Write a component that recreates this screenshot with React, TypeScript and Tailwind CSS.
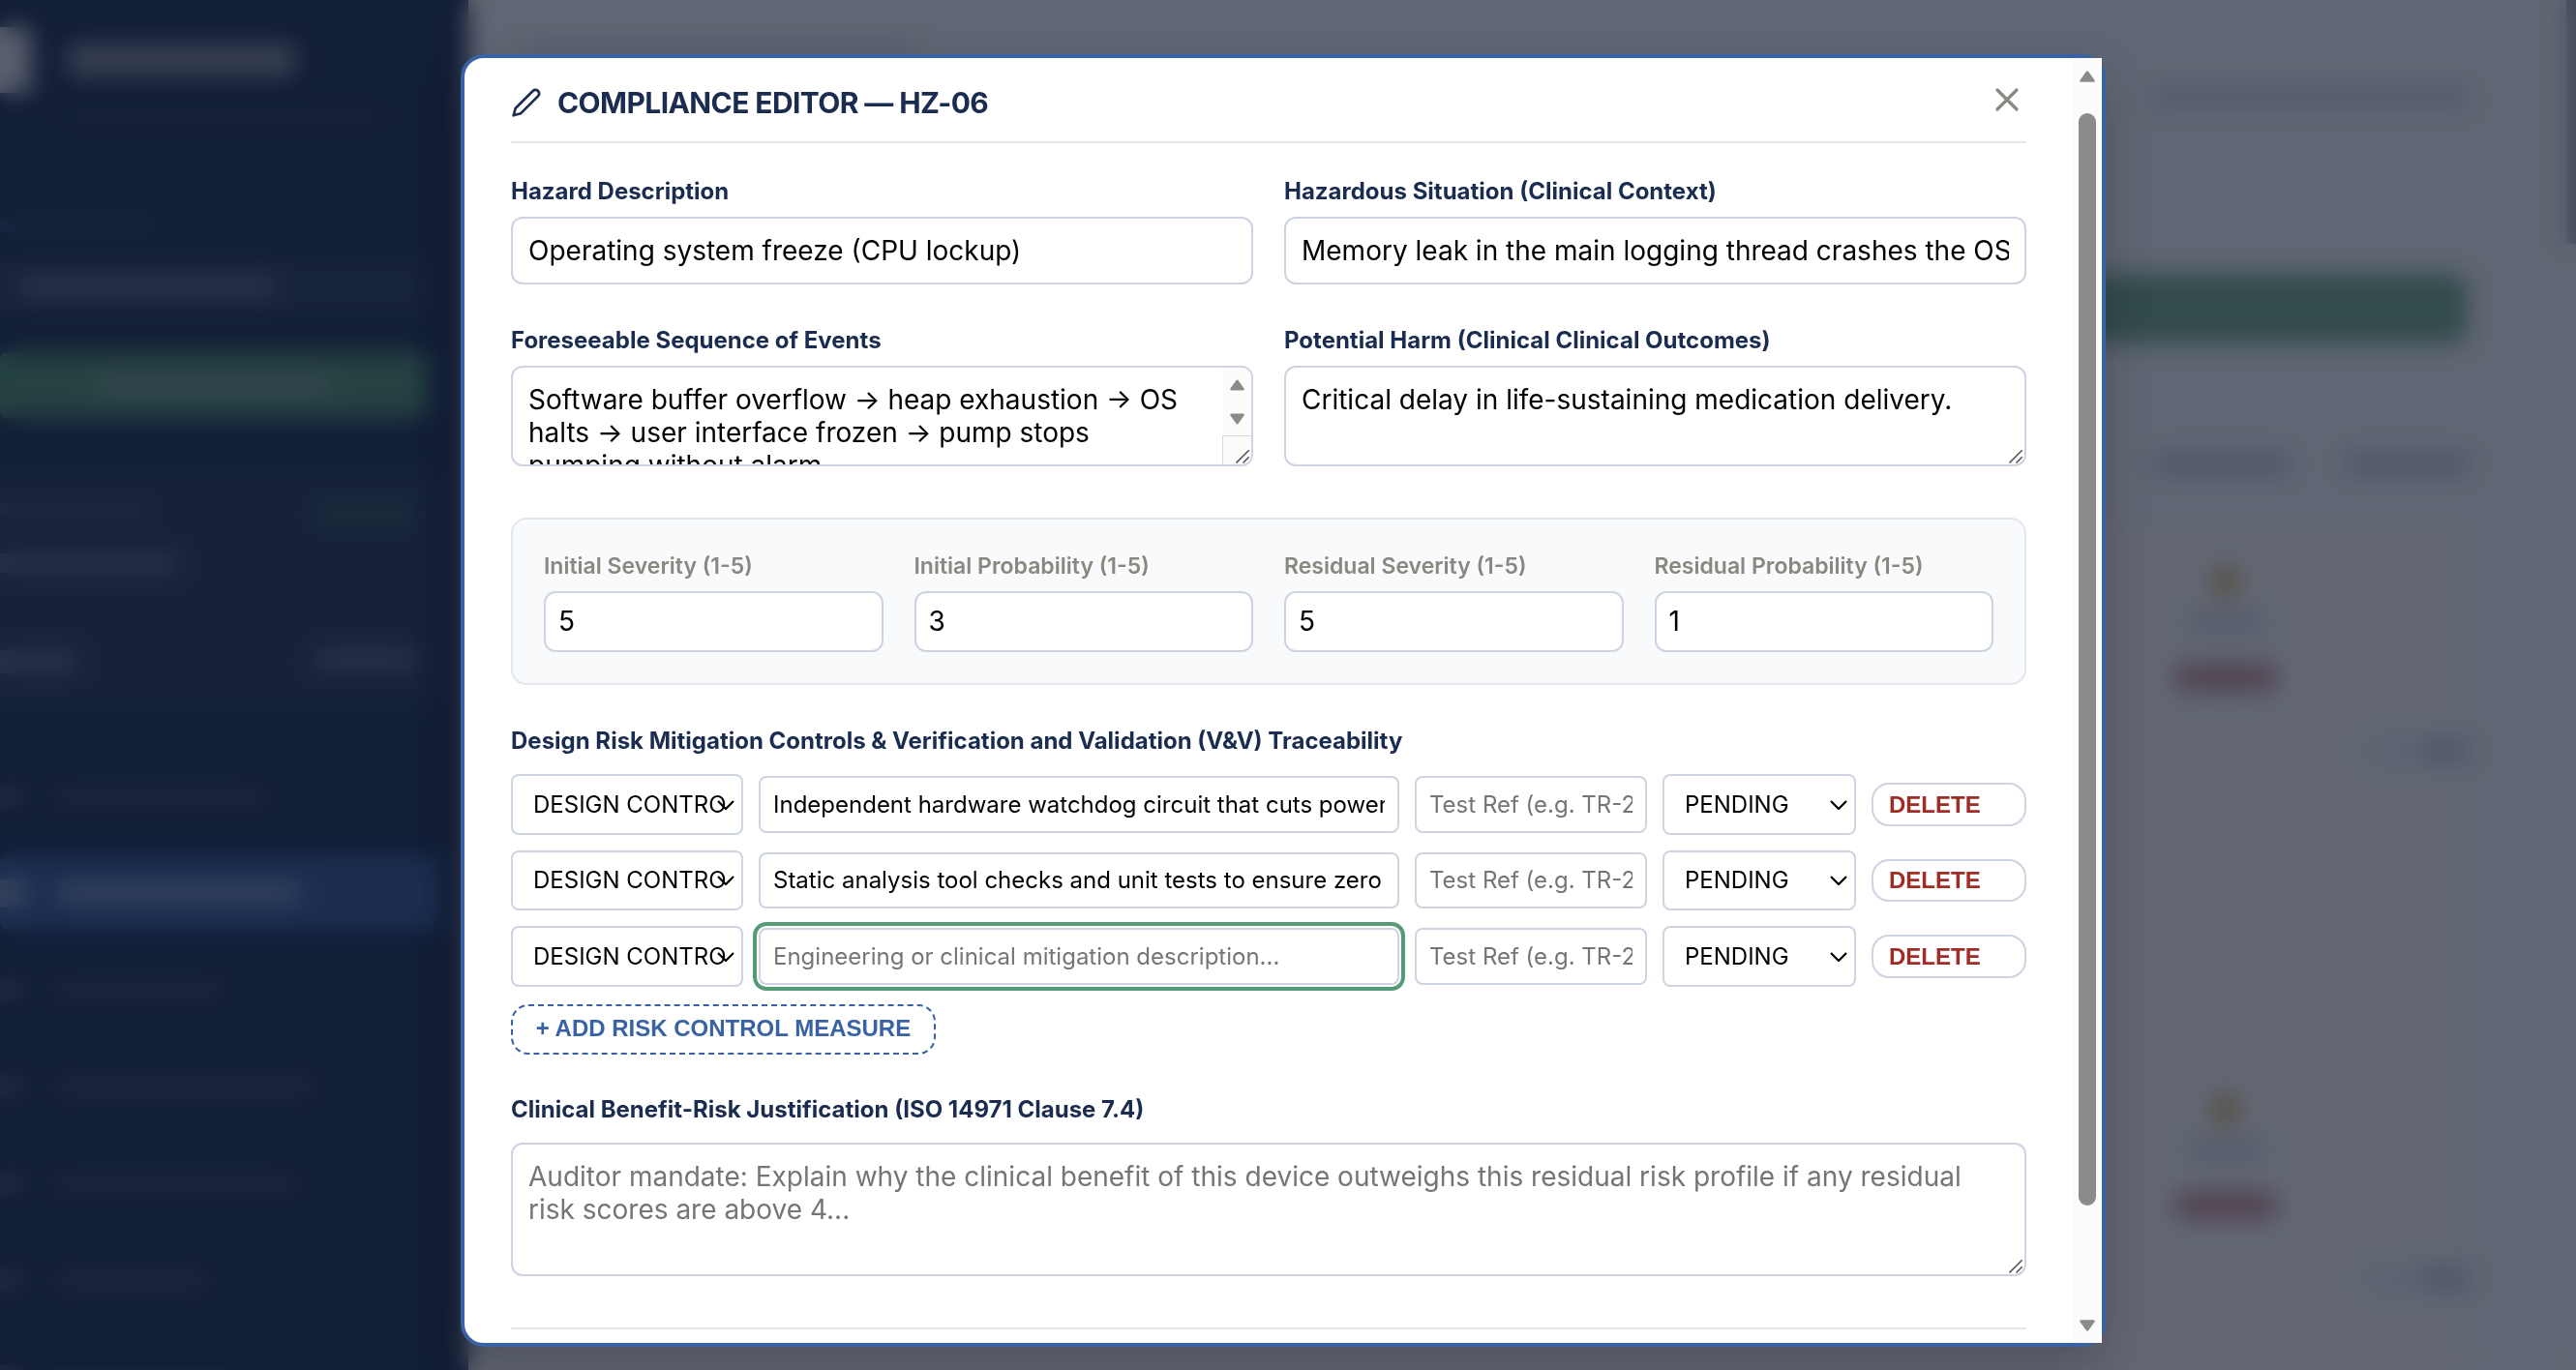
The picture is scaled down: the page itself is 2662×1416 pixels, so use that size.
import type { ReactNode } from 'react';

const NAV_WIDTHS = ['w-[220px]', 'w-[250px]', 'w-[175px]', 'w-[270px]', 'w-[250px]', 'w-[160px]', 'w-[180px]'];

const CONTROLS = [
  { description: 'Independent hardware watchdog circuit that cuts power to the pump motor' },
  { description: 'Static analysis tool checks and unit tests to ensure zero leaks' },
  { description: '', focused: true },
];

const SCORES = [
  { label: 'Initial Severity (1-5)', value: '5' },
  { label: 'Initial Probability (1-5)', value: '3' },
  { label: 'Residual Severity (1-5)', value: '5' },
  { label: 'Residual Probability (1-5)', value: '1' },
];

function PencilIcon() {
  return (
    <svg
      className="size-8 shrink-0"
      viewBox="0 0 24 24"
      fill="none"
      stroke="currentColor"
      strokeWidth="2"
      strokeLinecap="round"
      strokeLinejoin="round"
    >
      <path d="M17 3a2.828 2.828 0 1 1 4 4L7.5 20.5 2 22l1.5-5.5L17 3z" />
    </svg>
  );
}

function Arrow({ className }: { className: string }) {
  return (
    <svg className={className} viewBox="0 0 16 12">
      <path d="M8 1.5 14.5 10.5H1.5z" fill="#8b8b8b" stroke="#8b8b8b" strokeWidth="2.5" strokeLinejoin="round" />
    </svg>
  );
}

function ResizeGrip() {
  return (
    <svg className="absolute right-0 bottom-0 size-4" viewBox="0 0 16 16" stroke="#555" strokeWidth="1.6">
      <path d="M.5 14.500 13.700 1.300M7.500 14.500 13.700 8.300" fill="none" />
    </svg>
  );
}

function Label({ children }: { children: ReactNode }) {
  return <div className="h-[30px] text-[24px] leading-[32px] font-bold text-[#1a2c50]">{children}</div>;
}

function Chevron() {
  return (
    <svg
      className="absolute top-1/2 right-[7px] h-[10px] w-[18px] -translate-y-1/2"
      viewBox="0 0 18 10"
      fill="none"
      stroke="#000"
      strokeWidth="2.2"
    >
      <path d="M1 1 9 9 17 1" />
    </svg>
  );
}

function Select({ value }: { value: string }) {
  return (
    <div className="relative flex h-[62.6px] items-center rounded-[8px] border-2 border-[#cdd3e1] bg-white pt-[0.6px] pr-[14px] pl-[21px]">
      <span className="overflow-hidden text-[24px] whitespace-nowrap text-black">{value}</span>
      <Chevron />
    </div>
  );
}

function ControlRow({ description, focused }: { description: string; focused?: boolean }) {
  return (
    <div className="grid grid-cols-[240px_662px_240px_200px_160px] items-center gap-4">
      <Select value="DESIGN CONTROL" />
      <div
        className={
          focused
            ? 'flex h-[58.6px] items-center rounded-[8px] border-2 border-[#cdd3e1] px-[13px] pt-[0.6px] outline-4 outline-offset-2 outline-[#559b78]'
            : 'flex h-[58.6px] items-center rounded-[8px] border-2 border-[#cdd3e1] px-[13px] pt-[0.6px]'
        }
      >
        {description ? (
          <span className="overflow-hidden text-[24px] whitespace-nowrap text-black">{description}</span>
        ) : (
          <span className="text-[24px] whitespace-nowrap text-[#757575]">
            Engineering or clinical mitigation description...
          </span>
        )}
      </div>
      <div className="flex h-[58.6px] items-center rounded-[8px] border-2 border-[#cdd3e1] px-[13px] pt-[0.6px]">
        <span className="overflow-hidden text-[24px] whitespace-nowrap text-[#757575]">Test Ref (e.g. TR-204)</span>
      </div>
      <Select value="PENDING" />
      <button className="flex h-[44.6px] items-center rounded-[18px] border-2 border-[#cdd3e1] px-4 font-['Liberation_Sans',Arial,sans-serif] text-[24px] font-bold text-[#a02c26]">
        DELETE
      </button>
    </div>
  );
}

function Sidebar() {
  return (
    <div className="flex w-[484px] shrink-0 flex-col bg-[#1a2c50] pt-7 *:shrink-0">
      <div className="flex items-center">
        <div className="h-[68px] w-[32px] bg-[#dde2ea]" />
        <div className="ml-[38px] h-[34px] w-[235px] rounded bg-[#858c9c]" />
      </div>
      <div className="mt-[18px] ml-[60px] h-3 w-[340px] bg-[#2b4257]" />
      <div className="mt-[100px] h-[14px] w-[160px] bg-[#31426a]" />
      <div className="mt-[26px] flex h-[60px] w-[440px] items-center rounded-lg bg-[#283a5e] pl-5">
        <div className="h-6 w-[265px] bg-[#5a667f]" />
      </div>
      <div className="mt-[38px] flex h-[68px] w-[441px] items-center justify-center rounded-lg bg-[#4d9170]">
        <div className="h-5 w-[240px] bg-[#7da393]" />
      </div>
      <div className="mt-12 flex h-[255px] w-[450px] flex-col rounded-lg bg-[#25375b] pt-10 pr-5 *:shrink-0">
        <div className="flex justify-between">
          <div className="h-[14px] w-[155px] bg-[#3d4f68]" />
          <div className="h-5 w-[105px] bg-[#2c5a5c]" />
        </div>
        <div className="mt-[32px] h-5 w-[185px] bg-[#5a667f]" />
        <div className="mt-[80px] flex justify-between">
          <div className="h-6 w-[80px] bg-[#5a667f]" />
          <div className="h-5 w-[105px] bg-[#5f6b83]" />
        </div>
      </div>
      <div className="mt-[50px] flex flex-col gap-6">
        {NAV_WIDTHS.map((width, i) => (
          <div
            key={i}
            className={
              i === 1
                ? 'flex h-[76px] w-[454px] shrink-0 items-center gap-8 rounded-lg bg-[#325a9c]'
                : 'flex h-[76px] w-[454px] shrink-0 items-center gap-8'
            }
          >
            <div className={i === 1 ? 'h-7 w-7 bg-[#7d93bb]' : 'h-6 w-6 bg-[#3c4c6c]'} />
            <div className={`${width} ${i === 1 ? 'h-5 bg-[#7d93bb]' : 'h-4 bg-[#3c4c6c]'}`} />
          </div>
        ))}
      </div>
    </div>
  );
}

function TableRow() {
  return (
    <div className="flex h-[546px] shrink-0 justify-end">
      <div className="flex w-[110px] flex-col items-center pt-[28px]">
        <div className="h-9 w-9 rounded-full bg-[#dcc48a]" />
        <div className="mt-4 h-4 w-[80px] bg-[#cdd1db]" />
        <div className="mt-[33px] h-[32px] w-[110px] rounded-full bg-[#d09aa0]" />
      </div>
      <div className="ml-[90px] pt-[206px]">
        <div className="flex h-[30px] w-[105px] justify-end bg-[#ebeef3]">
          <div className="h-[30px] w-[45px] bg-[#c9ced9]" />
        </div>
      </div>
    </div>
  );
}

function MainPane() {
  return (
    <div className="flex flex-1 flex-col bg-[#f6f8fb] pr-[102px] pl-[60px] *:shrink-0">
      <div className="mt-[48px] h-[14px] w-[400px] bg-[#d3d6de]" />
      <div className="mt-[30px] flex justify-end">
        <div className="h-5 w-[325px] bg-[#d2d5dd]" />
      </div>
      <div className="mt-[171px] h-[72px] rounded-[16px] bg-[#74ac8c]" />
      <div className="mt-[114px] flex justify-end gap-[60px]">
        <div className="h-5 w-[135px] bg-[#bdc3d0]" />
        <div className="h-5 w-[125px] bg-[#bdc3d0]" />
      </div>
      <div className="mt-[50px] flex flex-col bg-[#fbfcfd] pt-4">
        <TableRow />
        <TableRow />
      </div>
    </div>
  );
}

export default function App() {
  return (
    <div className="relative h-[1416px] w-[2662px] overflow-hidden font-[Inter,sans-serif]">
      <div className="flex h-full overflow-hidden">
        <Sidebar />
        <MainPane />
        <div className="w-[10px] shrink-0 bg-[#f6f8fb]">
          <div className="h-[252px] w-[10px] bg-[#9ca1ac]" />
        </div>
      </div>

      {/* Backdrop */}
      <div className="absolute inset-0 flex items-start justify-center bg-[#0f172a]/65 pt-14 pr-[10px] backdrop-blur-[12px]">
        <div className="relative flex h-[1336px] w-[1700px] rounded-[24px] border-4 border-[#3962a5] bg-white shadow-[0_20px_50px_rgba(0,0,0,0.2)]">
          <div className="flex flex-1 flex-col px-12">
            {/* Header */}
            <div className="flex h-[88px] shrink-0 items-start justify-between border-b-2 border-[#e2e6ed]">
              <div className="mt-[28px] flex items-center gap-4 text-[#1a2c50]">
                <PencilIcon />
                <span className="text-[30px] leading-9 font-bold tracking-[-0.02em] whitespace-nowrap">
                  COMPLIANCE EDITOR — HZ-06
                </span>
              </div>
              <svg
                className="mt-[27px] mr-1 size-8"
                viewBox="0 0 32 32"
                stroke="#888880"
                strokeWidth="3.2"
                strokeLinecap="round"
              >
                <path d="M6 6 26 26M26 6 6 26" />
              </svg>
            </div>

            {/* Hazard fields */}
            <div className="mt-[34px] grid grid-cols-2 gap-x-8">
              <div>
                <Label>Hazard Description</Label>
                <div className="mt-3 flex h-[70px] items-center rounded-[12px] border-2 border-[#cdd3e1] px-4">
                  <span className="text-[28px] whitespace-nowrap">Operating system freeze (CPU lockup)</span>
                </div>
              </div>
              <div>
                <Label>Hazardous Situation (Clinical Context)</Label>
                <div className="mt-3 flex h-[70px] items-center rounded-[12px] border-2 border-[#cdd3e1] px-4">
                  <span className="overflow-hidden text-[28px] whitespace-nowrap">
                    Memory leak in the main logging thread crashes the OS scheduler.
                  </span>
                </div>
              </div>
              <div className="mt-[42px]">
                <Label>Foreseeable Sequence of Events</Label>
                <div className="relative mt-3 flex h-[104px] overflow-hidden rounded-[12px] border-2 border-[#cdd3e1]">
                  <div className="flex-1 pt-4 pl-4 text-[28px] leading-[34px] whitespace-nowrap">
                    Software buffer overflow → heap exhaustion → OS
                    <br />
                    halts → user interface frozen → pump stops
                    <br />
                    pumping without alarm.
                  </div>
                  <div className="flex w-[30px] flex-col items-center bg-[#fcfcfc]">
                    <Arrow className="mt-3 h-3 w-[15px]" />
                    <Arrow className="mt-[23px] h-3 w-[15px] rotate-180" />
                    <div className="mt-auto h-[30px] w-[30px] border-t border-l border-[#d9d9d9]" />
                  </div>
                  <ResizeGrip />
                </div>
              </div>
              <div className="mt-[42px]">
                <Label>Potential Harm (Clinical Clinical Outcomes)</Label>
                <div className="relative mt-3 h-[104px] rounded-[12px] border-2 border-[#cdd3e1] px-4 pt-4 text-[28px] leading-[34px]">
                  Critical delay in life-sustaining medication delivery.
                  <ResizeGrip />
                </div>
              </div>
            </div>

            {/* Risk scores */}
            <div className="mt-[53px] grid h-[173px] shrink-0 grid-cols-4 gap-x-8 rounded-[16px] border-2 border-[#e2e6ed] bg-[#f9fafc] px-8 pt-8">
              {SCORES.map(({ label, value }) => (
                <div key={label}>
                  <div className="h-[30px] text-[23px] leading-[33px] font-semibold whitespace-nowrap text-[#888880]">
                    {label}
                  </div>
                  <div className="mt-3 flex h-[62.6px] items-center rounded-[12px] border-2 border-[#cdd3e1] bg-white px-[13px] text-[28px]">
                    {value}
                  </div>
                </div>
              ))}
            </div>

            {/* Risk controls */}
            <div className="mt-[42.300px] flex flex-col">
              <Label>Design Risk Mitigation Controls &amp; Verification and Validation (V&amp;V) Traceability</Label>
              <div className="mt-5 flex flex-col gap-4">
                {CONTROLS.map((control, i) => (
                  <ControlRow key={i} {...control} />
                ))}
              </div>
              <button className="mt-[18px] h-[52px] w-[439px] rounded-[18px] border-2 border-dashed border-[#3962a5] pb-[2px] font-['Liberation_Sans',Arial,sans-serif] text-[24px] font-bold whitespace-nowrap text-[#3962a5]">
                + ADD RISK CONTROL MEASURE
              </button>
            </div>

            {/* Justification */}
            <div className="mt-[41px]">
              <Label>Clinical Benefit-Risk Justification (ISO 14971 Clause 7.4)</Label>
              <div className="relative mt-5 h-[138px] rounded-[12px] border-2 border-[#cdd3e1] px-4 pt-4 text-[28px] leading-[34px] text-[#757575]">
                Auditor mandate: Explain why the clinical benefit of this device outweighs this residual risk profile if any
                residual risk scores are above 4...
                <ResizeGrip />
              </div>
            </div>
            <div className="mt-[53px] h-[2px] shrink-0 bg-[#e2e6ed]" />
          </div>

          {/* Scrollbar */}
          <div className="flex w-[30px] flex-col items-center bg-[#fcfcfc]">
            <Arrow className="mt-[13px] h-3 w-4" />
            <div className="mt-8 h-[1129px] w-[18px] rounded-full bg-[#8b8b8b]" />
            <Arrow className="mt-auto mb-3 h-3 w-4 rotate-180" />
          </div>
        </div>
      </div>
    </div>
  );
}
